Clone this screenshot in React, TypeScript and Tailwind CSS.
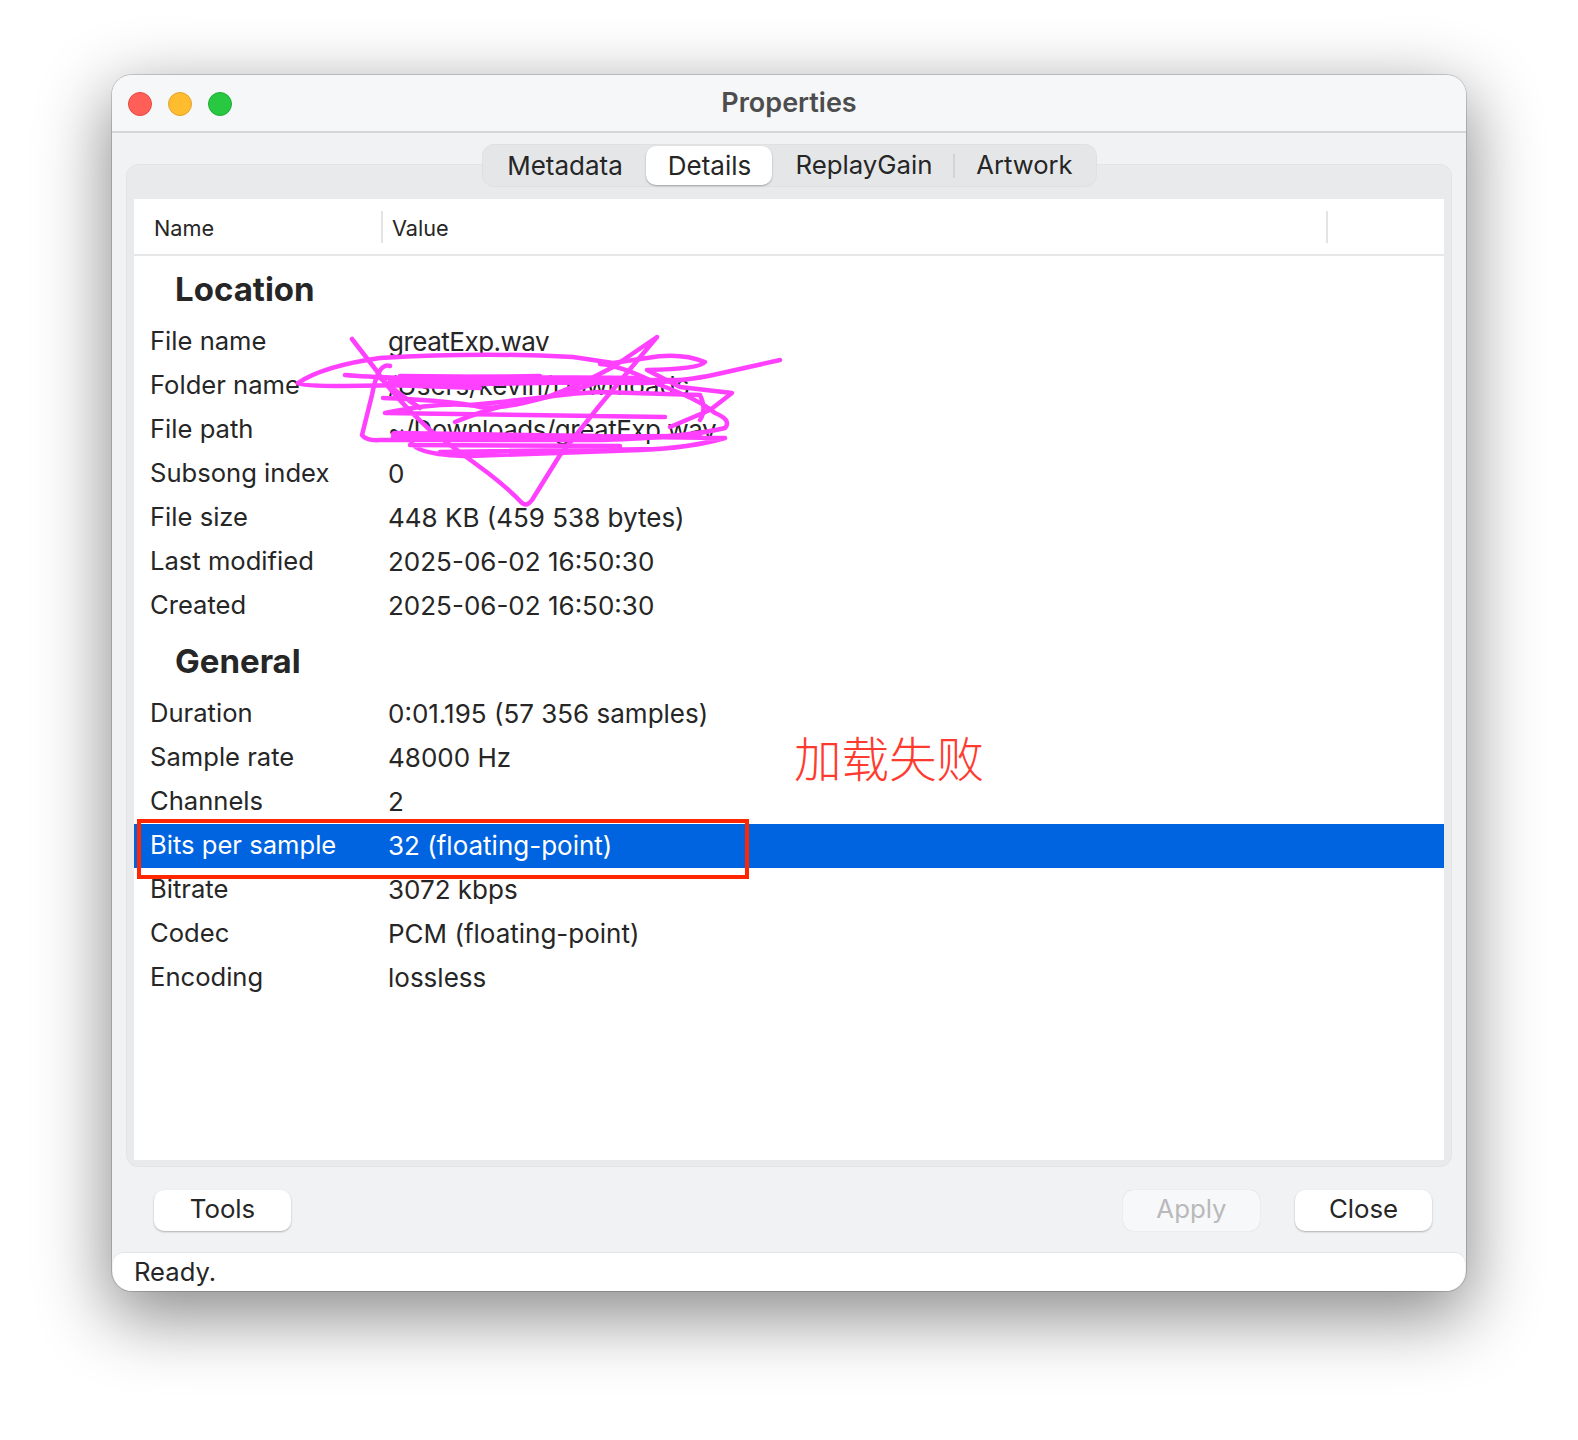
const FONT = "font-['Inter','Noto_Sans_CJK_SC',sans-serif]";

type Row = [string, string, boolean?];

const location: Row[] = [
  ["File name", "greatExp.wav", true],
  ["Folder name", "/Users/kevin/Downloads"],
  ["File path", "~/Downloads/greatExp.wav", true],
  ["Subsong index", "0"],
  ["File size", "448 KB (459 538 bytes)"],
  ["Last modified", "2025-06-02 16:50:30"],
  ["Created", "2025-06-02 16:50:30"],
];

const general: Row[] = [
  ["Duration", "0:01.195 (57 356 samples)"],
  ["Sample rate", "48000 Hz"],
  ["Channels", "2"],
  ["Bits per sample", "32 (floating-point)"],
  ["Bitrate", "3072 kbps"],
  ["Codec", "PCM (floating-point)"],
  ["Encoding", "lossless"],
];

function PropRow({ row, selected }: { row: Row; selected?: boolean }) {
  return (
    <div className={`flex h-[44px] items-center pb-[2px] pl-4 ${selected ? "bg-[#0064e1] text-white" : "text-[#262626]"}`}>
      <span className="w-[238px] whitespace-nowrap text-[25.6px]">{row[0]}</span>
      <span className={`whitespace-nowrap text-[26px] ${row[2] ? "tracking-[-0.5px]" : ""}`}>{row[1]}</span>
    </div>
  );
}

function Heading({ children }: { children: string }) {
  return (
    <div className="flex h-[64px] items-end pb-[11px] pl-[41px] text-[33px] font-bold leading-[40px] text-[#262626]">
      {children}
    </div>
  );
}

function Btn({ label, disabled }: { label: string; disabled?: boolean }) {
  return (
    <div
      className={`flex h-[41px] w-[137px] items-center justify-center rounded-[10px] pb-[2px] text-[25.8px] ${
        disabled
          ? "bg-[#f7f8f9] text-[#b9b9bb] shadow-[0_0_1px_rgba(0,0,0,0.2)]"
          : "bg-white text-[#262626] shadow-[0_1px_2px_rgba(0,0,0,0.28)]"
      }`}
    >
      {label}
    </div>
  );
}

export default function App() {
  return (
    <div className={`h-[1440px] w-[1578px] overflow-hidden bg-white pl-[112px] pt-[75px] ${FONT}`}>
      <div className="relative flex h-[1216px] w-[1354px] flex-col rounded-[20px] bg-[#f1f2f4] shadow-[0_0_0_1px_rgba(0,0,0,0.16),0_22px_70px_4px_rgba(0,0,0,0.46)]">
        {/* Title bar */}
        <div className="relative flex h-[58px] shrink-0 items-center justify-center rounded-t-[20px] border-b-2 border-[#d4d5d7] bg-[#f6f7f9]">
          <div className="absolute left-[16px] top-[17px] flex gap-4">
            <span className="h-6 w-6 rounded-full border border-[#e5483f] bg-[#ff5f57]" />
            <span className="h-6 w-6 rounded-full border border-[#e2a32a] bg-[#febc2e]" />
            <span className="h-6 w-6 rounded-full border border-[#1fae36] bg-[#28c840]" />
          </div>
          <span className="text-[27px] font-semibold text-[#4d4d4d]">Properties</span>
        </div>

        {/* Tabs */}
        <div className="relative z-10 mt-[11px] flex justify-center">
          <div className="flex h-[43px] w-[615px] items-center rounded-[12px] border border-[#dfe0e2] bg-[#e5e6e8] text-[26px] text-[#262626]">
            <span className="w-[163px] pb-[1px] pl-[2px] text-center">Metadata</span>
            <span className="flex h-[39px] w-[126px] items-center justify-center rounded-[10px] bg-white pb-[1px] pl-[2px] shadow-[0_1px_2px_rgba(0,0,0,0.3)]">
              Details
            </span>
            <span className="w-[181px] pb-[1px] pl-[4px] text-center text-[25.8px]">ReplayGain</span>
            <span className="h-[24px] w-[2px] bg-[#d2d3d5]" />
            <span className="w-[140px] pb-[1px] text-center text-[25.6px]">Artwork</span>
          </div>
        </div>

        {/* Panel */}
        <div className="mx-[14px] mt-[-23px] flex h-[1003px] flex-col rounded-[12px] border border-[#e3e4e6] bg-[#e9eaec] px-[7px] pb-[6px] pt-[34px]">
          <div className="flex flex-1 flex-col bg-white">
            <div className="relative flex h-[57px] shrink-0 items-center border-b-2 border-[#e6e7e8] text-[21.7px] text-[#262626]">
              <span className="w-[247px] pl-[20px] pt-[4px]">Name</span>
              <span className="h-[32px] w-[2px] bg-[#e3e4e5]" />
              <span className="pl-[9px] pt-[4px]">Value</span>
              <span className="ml-auto mr-[116px] h-[32px] w-[2px] bg-[#e3e4e5]" />
            </div>
            <Heading>Location</Heading>
            {location.map((r) => (
              <PropRow key={r[0]} row={r} />
            ))}
            <Heading>General</Heading>
            {general.map((r, i) => (
              <PropRow key={r[0]} row={r} selected={i === 3} />
            ))}
          </div>
        </div>

        {/* Buttons */}
        <div className="mt-[23px] flex pl-[42px] pr-[34px]">
          <Btn label="Tools" />
          <div className="ml-auto flex gap-[35px]">
            <Btn label="Apply" disabled />
            <Btn label="Close" />
          </div>
        </div>

        {/* Status bar */}
        <div className="mx-[1px] mt-[22px] flex h-[38px] flex-1 items-center rounded-b-[20px] rounded-t-[10px] bg-white pl-[21px] text-[25.6px] text-[#262626] shadow-[0_-1px_0_#e4e5e7]">
          Ready.
        </div>

        {/* Annotations */}
        <svg
          className="pointer-events-none absolute left-0 top-0 h-[1216px] w-[1354px]"
          viewBox="112 75 1354 1216"
          fill="none"
          stroke="#ff40ff"
          strokeWidth="4.5"
          strokeLinecap="round"
          strokeLinejoin="round"
        >
          <path d="M352 339 L376 370 Q392 395 430 430 L488 473 Q510 490 522 503 Q527 507 532 500 L560 455 L600 405 L657 337 L613 367 Q580 385 547 397 Q500 410 480 407 Q450 400 385 413 L665 417" />
          <path d="M298 383 Q323 366 380 358 Q480 352 573 357 L613 363 L647 358 Q680 352 705 362 Q700 369 647 370 L680 387 L732 393 L710 410 L670 427" />
          <path d="M298 383 Q300 386 345 386 L600 382" />
          <path d="M345 375 Q380 378 513 382 L647 383 Q690 380 713 375 L780 360" />
          <path d="M390 366 Q378 362 372 395 L362 435 Q366 441 380 440 L600 440 Q690 437 725 428 Q732 420 715 413 Q700 400 660 385 Q620 365 600 364" />
          <path d="M393 434 L725 438 M393 437 L700 436 M395 433 L600 436 M411 440 Q412 455 470 456 L640 450 Q690 448 725 438 M410 445 L620 446 M440 452 L660 449" />
          <path d="M380 378 Q400 395 420 408 M455 422 Q520 395 600 392 L700 395 Q707 410 700 420 M610 378 L560 395 M383 398 Q440 400 470 405 Q520 400 545 397" />
          <path d="M400 376 L640 378 M390 381 L680 380 M385 378 L540 376 M388 385 L480 388" />
        </svg>
        <div className="pointer-events-none absolute left-[25px] top-[744px] h-[60px] w-[612px] border-4 border-[#ff2600]" />
        <div className="pointer-events-none absolute left-[682px] top-[655px] whitespace-nowrap text-[47.5px] font-light leading-[60px] text-[#ff3b30]">
          加载失败
        </div>
      </div>
    </div>
  );
}
